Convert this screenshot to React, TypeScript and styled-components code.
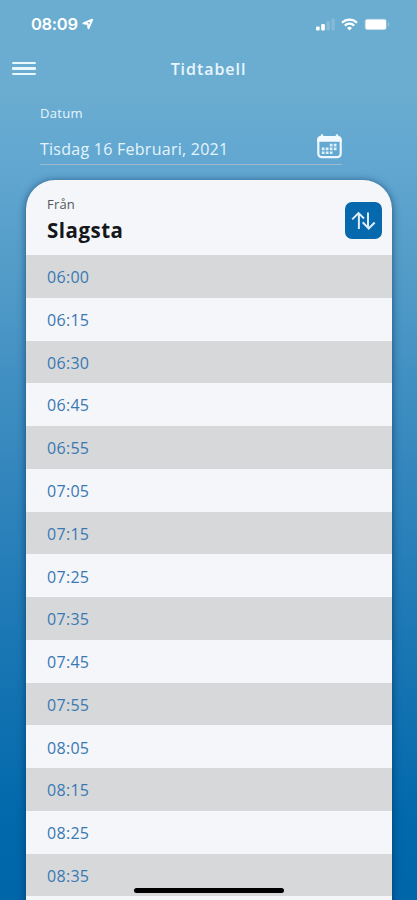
import React from 'react';
import styled, { createGlobalStyle } from 'styled-components';

const GlobalStyle = createGlobalStyle`
  * { box-sizing: border-box; }
  body { margin: 0; font-family: "Open Sans", "Noto Sans", sans-serif; }
`;

const Screen = styled.main`
  position: relative;
  width: 417px;
  height: 900px;
  overflow: hidden;
  display: flex;
  flex-direction: column;
  background: linear-gradient(180deg, #6badd0 0%, #6badd0 10%, #60a6d1 19%, #549dc9 29%, #3d8dc1 45%, #207ab6 67%, #0068ab 92%, #0066aa 100%);
`;

const StatusBar = styled.div`
  flex: none;
  height: 48px;
  padding: 0 27px 0 31px;
  display: flex;
  align-items: center;
  justify-content: space-between;
  color: #fff;
`;

const StatusGroup = styled.div<{ $gap: number }>`
  display: flex;
  align-items: center;
  gap: ${({ $gap }) => $gap}px;
`;

const Clock = styled.span`
  font: 600 16.5px/20px Inter, sans-serif;
  letter-spacing: -0.3px;
`;

const NavBar = styled.header`
  flex: none;
  height: 41px;
  padding: 0 12px;
  display: grid;
  grid-template-columns: 24px 1fr 24px;
  align-items: center;
`;

const MenuButton = styled.button`
  height: 24px;
  padding: 0;
  border: 0;
  background: none;
  display: flex;
  flex-direction: column;
  justify-content: center;
  gap: 3.5px;
`;

const MenuLine = styled.span`
  height: 2.2px;
  width: 24px;
  border-radius: 1px;
  background: #e9f7ff;
`;

const Title = styled.h1`
  margin: 0;
  text-align: center;
  font-size: 16px;
  font-weight: 600;
  line-height: 24px;
  letter-spacing: 0.95px;
  color: #e9f6fe;
`;

const DateField = styled.section`
  flex: none;
  margin: 14px 75px 0 40px;
  height: 62px;
  border-bottom: 1px solid #9bb9c6;
  color: #e4f4fd;
`;

const FieldLabel = styled.div`
  font-size: 13px;
  line-height: 20px;
  letter-spacing: 0.3px;
`;

const DateRow = styled.div`
  display: flex;
  justify-content: space-between;
  margin-top: 11px;
`;

const DateValue = styled.span`
  padding-top: 4px;
  font-size: 16px;
  line-height: 22px;
  letter-spacing: 0.26px;
`;

const Card = styled.section`
  flex: none;
  width: 366px;
  height: 730px;
  margin: 15px 0 0 26px;
  border-radius: 29px 29px 0 0;
  background: #f4f6fa;
  overflow: hidden;
  box-shadow: 0 1px 7px 1px rgba(0, 35, 75, 0.5);
`;

const CardHeader = styled.div`
  height: 75px;
  padding: 15px 10px 0 21px;
  display: flex;
  justify-content: space-between;
`;

const FromLabel = styled.div`
  font-size: 13px;
  line-height: 18px;
  letter-spacing: 0.2px;
  color: #555659;
`;

const Station = styled.div`
  font-size: 20.5px;
  font-weight: 700;
  line-height: 28px;
  letter-spacing: 0.5px;
  margin-top: 3px;
  color: #16171b;
`;

const SwapButton = styled.button`
  width: 37px;
  height: 37px;
  margin-top: 7px;
  padding: 0;
  border: 0;
  border-radius: 7px;
  background: #0769ad;
  display: grid;
  place-items: center;
`;

const TimeList = styled.ul`
  margin: 0;
  padding: 0;
  list-style: none;
`;

const TimeRow = styled.li`
  height: 42.77px;
  padding: 1.6px 0 0 21px;
  display: flex;
  align-items: center;
  font-size: 16px;
  letter-spacing: 0.3px;
  color: #3978b3;
  &:nth-child(odd) { background: #d6d8da; }
`;

const HomeIndicator = styled.div`
  position: absolute;
  left: 134px;
  top: 888px;
  width: 150px;
  height: 4.5px;
  border-radius: 3px;
  background: #000;
`;

const LocationArrow = () => (
  <svg width="12" height="12" viewBox="0 0 12 12" fill="none" stroke="#fff" strokeWidth="1.8" strokeLinejoin="round">
    <path d="M10.2 1.6 1.4 5.4 5.8 6l.7 4.4Z" />
  </svg>
);

const SignalIcon = () => (
  <svg width="19" height="13" viewBox="0 0 19 13" fill="#fff">
    <rect x="0" y="8.5" width="3.7" height="4" rx="1.1" />
    <rect x="5.2" y="6" width="3.7" height="6.5" rx="1.1" />
    <rect x="10.4" y="3.3" width="3.5" height="9.2" rx="1" opacity=".2" />
    <rect x="15.4" y="0.6" width="3.5" height="11.9" rx="1" opacity=".16" />
  </svg>
);

const WifiIcon = () => (
  <svg width="17" height="13" viewBox="0 0 17 13" fill="none" stroke="#fff" strokeWidth="2.2">
    <path d="M1 4.7a10.7 10.7 0 0 1 15 0" />
    <path d="M3.8 7.6a6.7 6.7 0 0 1 9.4 0" />
    <path d="m8.5 12.6-2.5-2.7a3.6 3.6 0 0 1 5 0Z" fill="#fff" stroke="none" />
  </svg>
);

const BatteryIcon = () => (
  <svg width="26" height="13" viewBox="0 0 26 13">
    <rect x=".5" y=".7" width="22.5" height="11.4" rx="3" fill="#fff" opacity=".25" />
    <rect x="1.5" y="1.4" width="20.5" height="10" rx="1.6" fill="#fff" />
    <path d="M24.2 4.3c1.5.8 1.5 3.4 0 4.2Z" fill="#fff" opacity=".45" />
  </svg>
);

const CalendarIcon = () => (
  <svg width="25" height="25" viewBox="0 0 25 25">
    <rect x="1.3" y="3" width="22.4" height="20.2" rx="3.5" fill="none" stroke="#edf7fd" strokeWidth="2.2" />
    <path d="M.2 7.8V5.6A3.6 3.6 0 0 1 3.8 2H21a3.6 3.6 0 0 1 3.6 3.6V7.8Z" fill="#f3faff" />
    <path d="M5 1.5v3M20 1.5v3" stroke="#f3faff" strokeWidth="2.6" strokeLinecap="round" />
    <path
      fill="#dff1fb"
      d="M12.8 9.8h2.7v2.7h-2.7zM16.8 9.8h2.7v2.7h-2.7zM4.8 13.6h2.7v2.7H4.8zM8.8 13.6h2.7v2.7H8.8zM12.8 13.6h2.7v2.7h-2.7zM16.8 13.6h2.7v2.7h-2.7zM4.8 17.4h2.7v2.7H4.8zM8.8 17.4h2.7v2.7H8.8zM12.8 17.4h2.7v2.7h-2.7z"
    />
  </svg>
);

const SwapIcon = () => (
  <svg width="25" height="20" viewBox="0 0 25 20" fill="none" stroke="#dcecf9" strokeWidth="2">
    <path d="M1.2 8.4 7.5 2.1l5.5 5.4M7.9 2.7V18M11.7 11.3l6 6.2 6-6M17 1.5V17" />
  </svg>
);

const departures = [
  '06:00', '06:15', '06:30', '06:45', '06:55', '07:05', '07:15', '07:25',
  '07:35', '07:45', '07:55', '08:05', '08:15', '08:25', '08:35',
];

export default function App() {
  return (
    <>
      <GlobalStyle />
      <Screen>
        <StatusBar>
          <StatusGroup $gap={4}>
            <Clock>08:09</Clock>
            <LocationArrow />
          </StatusGroup>
          <StatusGroup $gap={6}>
            <SignalIcon />
            <WifiIcon />
            <BatteryIcon />
          </StatusGroup>
        </StatusBar>
        <NavBar>
          <MenuButton aria-label="Meny">
            <MenuLine />
            <MenuLine />
            <MenuLine />
          </MenuButton>
          <Title>Tidtabell</Title>
        </NavBar>
        <DateField>
          <FieldLabel>Datum</FieldLabel>
          <DateRow>
            <DateValue>Tisdag 16 Februari, 2021</DateValue>
            <CalendarIcon />
          </DateRow>
        </DateField>
        <Card>
          <CardHeader>
            <div>
              <FromLabel>Från</FromLabel>
              <Station>Slagsta</Station>
            </div>
            <SwapButton aria-label="Byt riktning">
              <SwapIcon />
            </SwapButton>
          </CardHeader>
          <TimeList>
            {departures.map((time) => (
              <TimeRow key={time}>{time}</TimeRow>
            ))}
          </TimeList>
        </Card>
        <HomeIndicator />
      </Screen>
    </>
  );
}
